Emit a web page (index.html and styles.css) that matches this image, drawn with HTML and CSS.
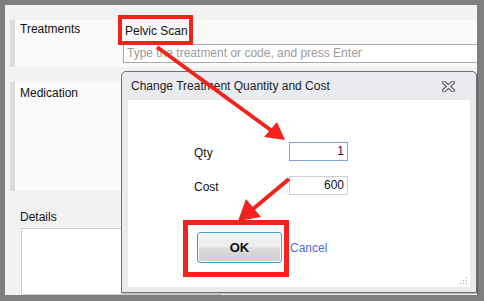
FILE: index.html
```html
<!DOCTYPE html>
<html>
<head>
<meta charset="utf-8">
<link rel="stylesheet" href="styles.css">
</head>
<body>
<div class="frame">
  <div class="app">
    <div class="row row-treat">
      <div class="label">Treatments</div>
      <div class="field">
        <div class="chip">Pelvic Scan</div>
        <div class="input placeholder">Type the treatment or code, and press Enter</div>
      </div>
    </div>
    <div class="row row-med">
      <div class="label">Medication</div>
    </div>
    <div class="details">
      <div class="label">Details</div>
      <div class="textarea"></div>
    </div>
  </div>

  <div class="dialog">
    <div class="title">
      <span>Change Treatment Quantity and Cost</span>
      <svg class="close" width="13" height="11" viewBox="0 0 13 11">
        <path d="M2 1.5 L11 9.5 M11 1.5 L2 9.5" stroke="#5a5f66" stroke-width="4" stroke-linecap="square"/>
        <path d="M2 1.5 L11 9.5 M11 1.5 L2 9.5" stroke="#ffffff" stroke-width="1.6" stroke-linecap="square"/>
      </svg>
    </div>
    <div class="body">
      <div class="form">
        <div class="flabel">Qty</div>
        <div class="num focus">1</div>
        <div class="flabel">Cost</div>
        <div class="num plain">600</div>
      </div>
      <div class="actions">
        <div class="btn">OK</div>
        <span class="link">Cancel</span>
      </div>
      <svg class="grip" width="9" height="9" viewBox="0 0 9 9">
        <rect x="7" y="1" width="1" height="1" fill="#9a9a9a"/>
        <rect x="4" y="4" width="1" height="1" fill="#9a9a9a"/>
        <rect x="7" y="4" width="1" height="1" fill="#9a9a9a"/>
        <rect x="1" y="7" width="1" height="1" fill="#9a9a9a"/>
        <rect x="4" y="7" width="1" height="1" fill="#9a9a9a"/>
        <rect x="7" y="7" width="1" height="1" fill="#9a9a9a"/>
      </svg>
    </div>
  </div>

  <svg class="annot" width="484" height="301" viewBox="0 0 484 301">
    <rect x="120" y="17" width="71" height="26" fill="none" stroke="#f3231b" stroke-width="4"/>
    <rect x="185.5" y="222.5" width="101" height="52" fill="none" stroke="#f3231b" stroke-width="5"/>
    <line x1="157" y1="47" x2="272" y2="131" stroke="#f3231b" stroke-width="4"/>
    <polygon points="285,140 264,137 277,122" fill="#f3231b"/>
    <line x1="289" y1="179" x2="253" y2="209" stroke="#f3231b" stroke-width="4"/>
    <polygon points="238,221 246,199 261,217" fill="#f3231b"/>
  </svg>
</div>
</body>
</html>
```

FILE: styles.css
```css
* { box-sizing: border-box; }
html, body { margin: 0; padding: 0; }
body {
  font-family: "Liberation Sans", Arial, sans-serif;
  font-size: 12px;
  color: #111;
}
.frame {
  position: relative;
  width: 484px;
  height: 301px;
  background: #7f7f7f;
  padding: 5px 7px 6px 5px;
  overflow: hidden;
}
.app {
  background: #f2f2f2;
  height: 100%;
  padding-top: 15px;
  display: flex;
  flex-direction: column;
}
.row {
  margin-left: 5px;
  border-left: 5px solid #dcdcdc;
  background: #fafafa;
  display: flex;
}
.row-treat { height: 47px; }
.row-med { height: 109px; margin-top: 15px; }
.label {
  width: 108px;
  padding-left: 5px;
  padding-top: 2px;
  line-height: 15px;
  flex: none;
}
.row-med .label { padding-top: 4px; }
.field {
  flex: 1;
  display: flex;
  flex-direction: column;
}
.chip {
  padding-left: 2px;
  padding-top: 4px;
  line-height: 15px;
  height: 24px;
}
.input {
  height: 19px;
  border: 1px solid #a9a9a9;
  border-right: none;
  background: #fff;
  padding-left: 3px;
  line-height: 17px;
}
.placeholder { color: #9b9b9b; }
.details {
  margin-left: 10px;
  flex: 1;
  display: flex;
  flex-direction: column;
}
.details .label { padding-top: 19px; height: 37px; }
.textarea {
  margin-left: 6px;
  width: 200px;
  flex: 1;
  background: #fff;
  border: 1px solid #cfcfcf;
}

.dialog {
  position: absolute;
  left: 121px;
  top: 71px;
  width: 356px;
  height: 222px;
  border: 1px solid #6f6f6f;
  border-radius: 5px 5px 0 0;
  background: #e9ebef;
  padding: 0 6px 5px 6px;
  display: flex;
  flex-direction: column;
  box-shadow: 1px 1px 1px rgba(0,0,0,0.25);
}
.title {
  height: 28px;
  flex: none;
  display: flex;
  align-items: center;
  justify-content: space-between;
  padding-left: 3px;
  padding-right: 15px;
  font-size: 12px;
  color: #1e1e1e;
}
.close { display: block; }
.body {
  position: relative;
  flex: 1;
  background: #fff;
  padding-top: 42px;
}
.form {
  margin-left: 66px;
  display: grid;
  grid-template-columns: 95px 59px;
  grid-auto-rows: 19px;
  row-gap: 15px;
  align-items: center;
}
.flabel { line-height: 15px; padding-top: 3px; }
.num {
  height: 19px;
  border: 1px solid #cfcfcf;
  text-align: right;
  padding-right: 3px;
  line-height: 17px;
}
.num.focus { border-color: #7aa7d9; color: #3a0a40; }
.actions {
  margin-top: 37px;
  margin-left: 69px;
  display: flex;
  align-items: center;
  gap: 8px;
}
.btn {
  width: 85px;
  height: 31px;
  border: 1px solid #3c9fd8;
  border-radius: 3px;
  background: linear-gradient(#f3f3f3, #ececec 48%, #dcdcdc 52%, #d0d0d0);
  box-shadow: inset 0 0 0 1px #f8fbfd;
  display: flex;
  align-items: center;
  justify-content: center;
  font-weight: bold;
  font-size: 13px;
  color: #111;
}
.link { color: #4b6fd6; }
.grip {
  position: absolute;
  right: 2px;
  bottom: 2px;
}
.annot {
  position: absolute;
  left: 0;
  top: 0;
  pointer-events: none;
}
```
